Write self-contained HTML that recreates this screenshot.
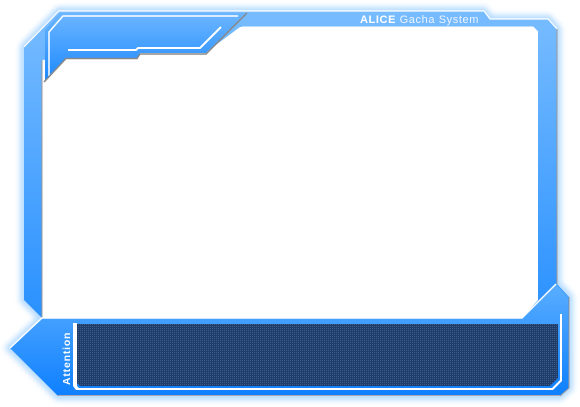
<!DOCTYPE html>
<html><head><style>html,body{margin:0;padding:0;background:#fff;width:580px;height:407px;overflow:hidden}</style></head><body>
<svg width="580" height="407" viewBox="0 0 580 407" xmlns="http://www.w3.org/2000/svg">
<defs>
<linearGradient id="g" x1="0" y1="0" x2="0" y2="1"><stop offset="0" stop-color="#78bcff"/><stop offset="1" stop-color="#1686ff"/></linearGradient>
<linearGradient id="gt" x1="0" y1="0" x2="0" y2="1"><stop offset="0" stop-color="#6cb6ff"/><stop offset="1" stop-color="#1c88ff"/></linearGradient>
<linearGradient id="gb" x1="0" y1="0" x2="0" y2="1"><stop offset="0" stop-color="#5aaeff"/><stop offset="1" stop-color="#0f80ff"/></linearGradient>
<pattern id="dots" width="2" height="2" patternUnits="userSpaceOnUse"><rect width="2" height="2" fill="#203c68"/><rect width="1" height="1" fill="#3c5c8c"/></pattern>
<filter id="blur" x="-10%" y="-10%" width="120%" height="120%"><feGaussianBlur stdDeviation="3"/></filter>
</defs>
<g filter="url(#blur)" fill="none" stroke="#b4daff" stroke-width="8">
<path d="M24,47 L59,11 L484,11 L490,19 L548,19 L557,29 L557,284 L569,297 L569,388 L560,396 L58,396 L10,348 L42,318 L24,300 Z"/>
</g>
<path fill="url(#g)" fill-rule="evenodd" d="M24,47 L59,11 L484,11 L490,19 L548,19 L557,29 L557,284 L569,297 L569,388 L560,396 L58,396 L10,348 L42,318 L24,300 Z
M42,60 L42,318 L522,318 L538,300 L538,32 L533,27 L240,27 L205,53 L68,58 Z"/>
<path fill="#fff" d="M46,82 L67,58 L137,58 L140,53 L205,53 L242,27 L533,27 L538,32 L538,300 L522,318 L42,318 L42,82 Z"/>
<path fill="url(#gt)" d="M45,30 L60,13 L246,13 L206,53 L140,53 L137,58 L67,58 L45,82 Z"/>
<path fill="none" stroke="#fff" stroke-width="1.5" d="M49,76 L49,32 L63,16 L238,16"/>
<path fill="none" stroke="#fff" stroke-width="2" d="M68,50 L136,50 L138,48 L200,48 L221,27"/>
<path fill="none" stroke="#888" stroke-width="1.5" d="M44,82 L66,58.5 L137,58.5 L140,54 L206,54 L247,13"/>
<path fill="none" stroke="#fff" stroke-width="1.2" d="M24,47 L59,11 L484,11 M484,11 L490,19 L548,19 L557,29"/>
<path fill="none" stroke="#fff" stroke-width="1" d="M242,27 L533,27 L538,32"/>
<path fill="none" stroke="#999" stroke-width="1" d="M42,60 L42,318 M557,29 L557,284 M569,297 L569,388 L560,396"/>
<path fill="url(#gb)" d="M10,348 L42,318 L522,318 L556,284 L568,297 L568,388 L560,395 L58,395 Z"/>
<path fill="none" stroke="#fff" stroke-width="1.5" d="M10,348 L42,318 L522,318 L556,284"/>
<path fill="none" stroke="#aaa" stroke-width="1" d="M58,395.5 L560,395.5"/>
<path fill="#fff" d="M73,323 L77,323 L77,386 L79,388 L552,388 L560,380 L560,314 L562,314 L562,381 L553,390 L76,390 L73,386 Z"/>
<path fill="url(#dots)" d="M77,324 L558,324 L558,378 L550,386 L80,386 L77,383 Z"/>
<text x="0" y="0" transform="translate(70,385) rotate(-90)" font-family="Liberation Sans, sans-serif" font-weight="bold" font-size="10.5" fill="#fff" letter-spacing="0.8">Attention</text>
<text x="360" y="23" font-family="Liberation Sans, sans-serif" font-size="11" fill="#fff" letter-spacing="0.6"><tspan font-weight="bold">ALICE</tspan><tspan fill="#eaf4ff"> Gacha System</tspan></text>
</svg>
</body></html>
